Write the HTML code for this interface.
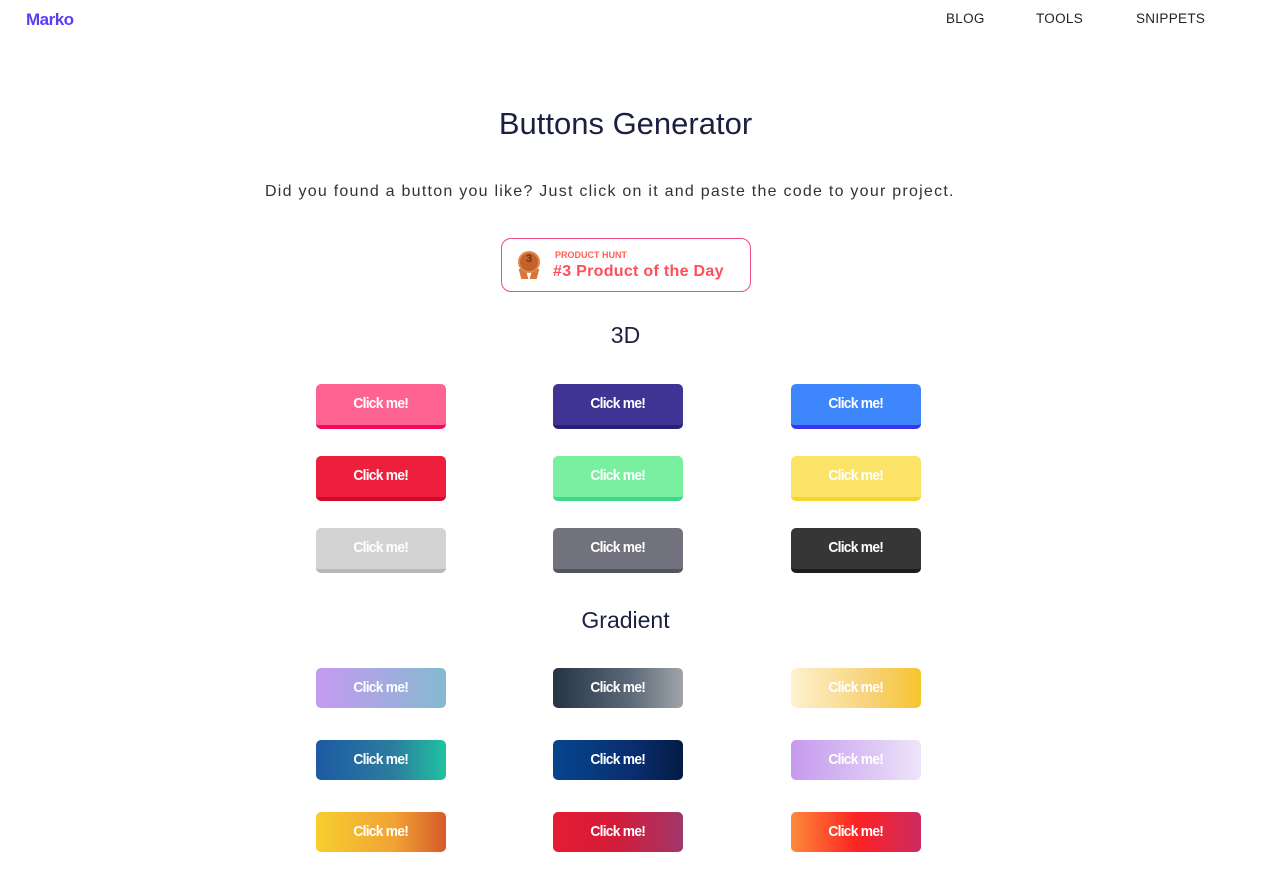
<!DOCTYPE html>
<html><head><meta charset="utf-8"><style>
*{box-sizing:border-box;margin:0;padding:0}
body{width:1261px;height:894px;background:#fff;font-family:"Liberation Sans",sans-serif;color:#1f2233;position:relative;overflow:hidden}
.logo{position:absolute;left:26px;top:10px;color:#5b3df5;font-size:17px;font-weight:bold;letter-spacing:-.5px}
.nav{position:absolute;top:11px;font-size:13.5px;letter-spacing:.3px;color:#222}
h1{position:absolute;top:106px;left:0;width:1251px;text-align:center;font-size:31px;font-weight:normal;color:#1c2040}
.sub{position:absolute;top:183px;left:265px;font-size:16px;color:#333;letter-spacing:1.25px;white-space:nowrap}
.ph{position:absolute;left:501px;top:238px;width:250px;height:54px;border:1px solid #f04e7a;border-radius:10px}
.ph .m{position:absolute;left:16px;top:12px;width:22px;height:22px;border-radius:50%;background:#c4622d;border:2px solid #e08a4a}
.ph .r1,.ph .r2{position:absolute;top:30px;width:7px;height:10px;background:#d9743a}
.ph .r1{left:18px;transform:skewX(15deg)}.ph .r2{left:29px;transform:skewX(-15deg)}
.ph .n{position:absolute;left:16px;top:14px;width:22px;text-align:center;font-size:11px;font-weight:bold;color:#7a3010}
.ph .a{position:absolute;left:53px;top:11px;font-size:9px;font-weight:bold;color:#ff6154}
.ph .b{position:absolute;left:51px;top:24px;font-size:16px;font-weight:bold;color:#ff4f5a;letter-spacing:.3px}
h2{position:absolute;left:0;width:1251px;text-align:center;font-size:23px;font-weight:normal;color:#1c2040}
.btn{position:absolute;width:130px;height:45px;border-radius:5px;color:#fff;font-weight:bold;font-size:15px;text-align:center;line-height:40px;letter-spacing:-.8px}
.btn span{display:inline-block;transform:scaleX(.92)}
.g{height:40px;line-height:40px}
</style></head><body>
<div class="logo">Marko</div>
<div class="nav" style="left:946px">BLOG</div>
<div class="nav" style="left:1036px">TOOLS</div>
<div class="nav" style="left:1136px">SNIPPETS</div>
<h1>Buttons Generator</h1>
<div class="sub">Did you found a button you like? Just click on it and paste the code to your project.</div>
<div class="ph"><div class="r1"></div><div class="r2"></div><div class="m"></div><div class="n">3</div><div class="a">PRODUCT HUNT</div><div class="b">#3 Product of the Day</div></div>
<h2 style="top:322px">3D</h2>
<div class="btn" style="left:316px;top:384px;background:#ff6391;border-bottom:4px solid #f7095a"><span>Click me!</span></div>
<div class="btn" style="left:553px;top:384px;background:#3f3493;border-bottom:4px solid #2a1f78"><span>Click me!</span></div>
<div class="btn" style="left:791px;top:384px;background:#3d86fb;border-bottom:4px solid #3b33f0"><span>Click me!</span></div>
<div class="btn" style="left:316px;top:456px;background:#ee1f3d;border-bottom:4px solid #cf0a2c"><span>Click me!</span></div>
<div class="btn" style="left:553px;top:456px;background:#79f09f;border-bottom:4px solid #3fd88a"><span>Click me!</span></div>
<div class="btn" style="left:791px;top:456px;background:#fbe368;border-bottom:4px solid #f6d62e"><span>Click me!</span></div>
<div class="btn" style="left:316px;top:528px;background:#d3d3d3;border-bottom:4px solid #b8b8b8"><span>Click me!</span></div>
<div class="btn" style="left:553px;top:528px;background:#72727e;border-bottom:4px solid #55555f"><span>Click me!</span></div>
<div class="btn" style="left:791px;top:528px;background:#363636;border-bottom:4px solid #1d1d1d"><span>Click me!</span></div>
<h2 style="top:607px">Gradient</h2>
<div class="btn g" style="left:316px;top:668px;background:linear-gradient(90deg,#c69af0,#84b9d1)"><span>Click me!</span></div>
<div class="btn g" style="left:553px;top:668px;background:linear-gradient(90deg,#253342,#5c6a7a 60%,#a0a4a8)"><span>Click me!</span></div>
<div class="btn g" style="left:791px;top:668px;background:linear-gradient(90deg,#fdf2d0,#f8d27a 60%,#f5c52e)"><span>Click me!</span></div>
<div class="btn g" style="left:316px;top:740px;background:linear-gradient(90deg,#1c5aa3,#2c7da0 60%,#21c2a0)"><span>Click me!</span></div>
<div class="btn g" style="left:553px;top:740px;background:linear-gradient(90deg,#05468e,#0a2e70 60%,#041c44)"><span>Click me!</span></div>
<div class="btn g" style="left:791px;top:740px;background:linear-gradient(90deg,#c599ee,#e0cdf6 70%,#eee4fa)"><span>Click me!</span></div>
<div class="btn g" style="left:316px;top:812px;background:linear-gradient(90deg,#f6ce2f,#f1a335 60%,#d75a2a)"><span>Click me!</span></div>
<div class="btn g" style="left:553px;top:812px;background:linear-gradient(90deg,#e61c33,#d21c3a 50%,#a0376a)"><span>Click me!</span></div>
<div class="btn g" style="left:791px;top:812px;background:linear-gradient(90deg,#fd8a3b,#ff2222 50%,#cc2a60)"><span>Click me!</span></div>
</body></html>
